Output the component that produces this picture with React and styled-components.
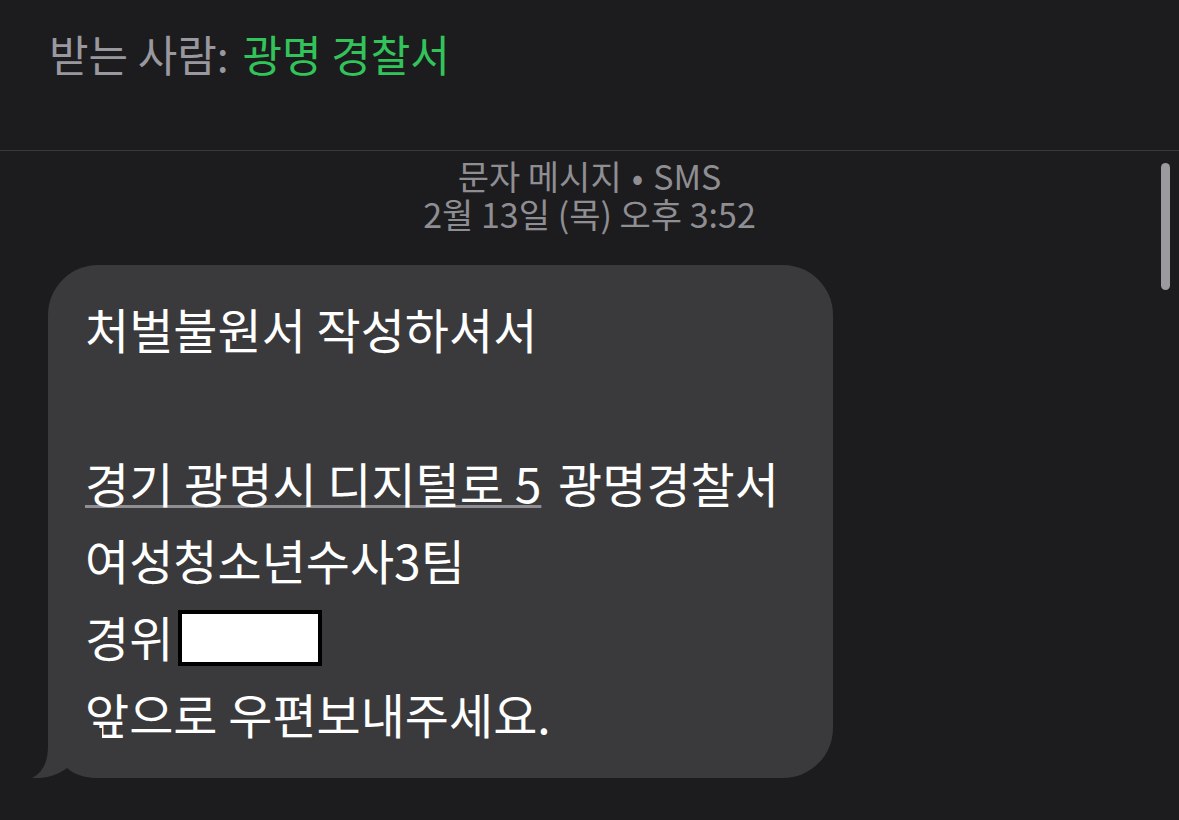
import styled, { createGlobalStyle } from 'styled-components';

const GlobalStyle = createGlobalStyle`
  html, body {
    margin: 0;
    padding: 0;
    background: #1c1c1e;
  }
  body {
    font-family: 'Noto Sans CJK KR', 'Noto Sans', sans-serif;
    -webkit-font-smoothing: antialiased;
  }
`;

const Screen = styled.div`
  position: relative;
  width: 1179px;
  height: 820px;
  overflow: hidden;
  background: #1c1c1e;
  display: flex;
  flex-direction: column;
`;

const Header = styled.header`
  height: 151px;
  box-sizing: border-box;
  padding: 28px 0 0 49px;
  border-bottom: 1px solid #3a3a3d;
  font-size: 43px;
  line-height: 50px;
  color: #98989e;
`;

const Recipient = styled.span`
  color: #32c45a;
  margin-left: 4px;
`;

const Stamp = styled.div`
  margin-top: 6px;
  text-align: center;
  color: #8e8e93;
  font-size: 34px;
  line-height: 38px;
`;

const Dot = styled.span`
  margin: 0 10px;
`;

const Thread = styled.div`
  padding: 32px 0 0 48px;
`;

const Bubble = styled.div`
  position: relative;
  width: 785px;
  box-sizing: border-box;
  padding: 25px 0 26px 37px;
  background: #3a3a3c;
  border-radius: 50px;
  color: #ffffff;
  font-size: 48px;
  line-height: 77px;
`;

const Line = styled.div`
  height: 77px;
  white-space: nowrap;
`;

const Address = styled.span`
  text-decoration: underline;
  text-decoration-color: #8e8e93;
  text-decoration-thickness: 3px;
  text-underline-offset: 2px;
  margin-right: 6px;
`;

const Redacted = styled.span`
  display: inline-block;
  width: 144px;
  height: 56px;
  box-sizing: border-box;
  margin-left: 5px;
  background: #ffffff;
  border: 4px solid #000000;
  vertical-align: -9px;
`;

const Tail = styled.svg`
  position: absolute;
  left: -16px;
  bottom: 0;
  width: 70px;
  height: 50px;
`;

const ScrollThumb = styled.div`
  position: absolute;
  top: 163px;
  right: 9px;
  width: 9px;
  height: 127px;
  border-radius: 5px;
  background: #9a9a9f;
`;

export default function App() {
  return (
    <>
      <GlobalStyle />
      <Screen>
        <Header>
          받는 사람: <Recipient>광명 경찰서</Recipient>
        </Header>
        <Stamp>
          <div>
            문자 메시지<Dot>•</Dot>SMS
          </div>
          <div>2월 13일 (목) 오후 3:52</div>
        </Stamp>
        <Thread>
          <Bubble>
            <Line>처벌불원서 작성하셔서</Line>
            <Line />
            <Line>
              <Address>경기 광명시 디지털로 5</Address> 광명경찰서
            </Line>
            <Line>여성청소년수사3팀</Line>
            <Line>
              경위<Redacted />
            </Line>
            <Line>앞으로 우편보내주세요.</Line>
            <Tail viewBox="0 0 70 50">
              <path
                d="M16 0 L16 18 C16 35 10 45 0 50 C13 51 26 47 35 40 C42 46 50 50 70 50 L70 0 Z"
                fill="#3a3a3c"
              />
            </Tail>
          </Bubble>
        </Thread>
        <ScrollThumb />
      </Screen>
    </>
  );
}
